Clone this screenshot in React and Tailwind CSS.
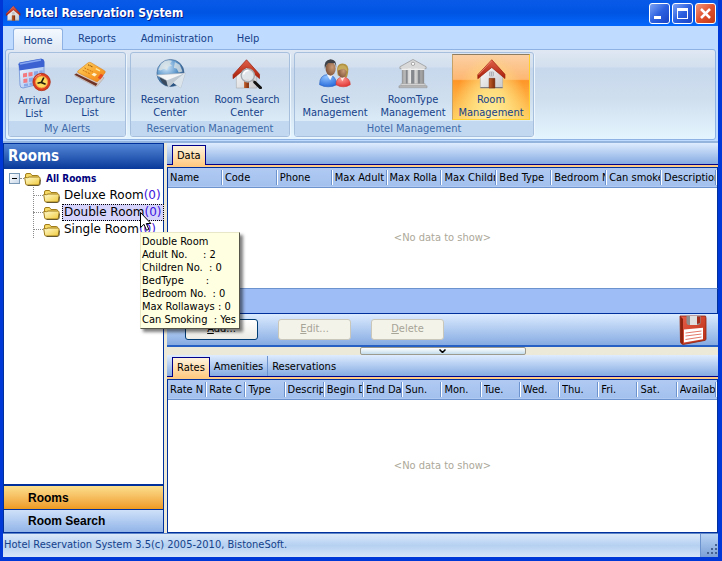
import React from "react";
import clsx from "clsx";

const ribbonTabs = [
  { name: "Home", width: "w-[50px]", active: true },
  { name: "Reports", width: "w-[68px]" },
  { name: "Administration", width: "w-[92px]" },
  { name: "Help", width: "w-[50px]" },
];

const roomColumns = ["Name", "Code", "Phone", "Max Adult", "Max Rolla", "Max Childr", "Bed Type", "Bedroom N", "Can smoke", "Description"];
const rateColumns = ["Rate N", "Rate C", "Type", "Descrip", "Begin D", "End Da", "Sun.", "Mon.", "Tue.", "Wed.", "Thu.", "Fri.", "Sat.", "Availab"];

const roomDetails = [
  "Double Room",
  "Adult No.     : 2",
  "Children No.  : 0",
  "BedType       :",
  "Bedroom No.  : 0",
  "Max Rollaways : 0",
  "Can Smoking  : Yes",
];

function Defs() {
  return (
    <svg className="absolute h-0 w-0" aria-hidden="true">
      <defs>
        <linearGradient id="roof" x1="0" y1="0" x2="0" y2="1">
          <stop offset="0" stopColor="#e0604a" />
          <stop offset="1" stopColor="#a81e08" />
        </linearGradient>
        <linearGradient id="wall" x1="0" y1="0" x2="1" y2="1">
          <stop offset="0" stopColor="#ffffff" />
          <stop offset="1" stopColor="#c9c9cc" />
        </linearGradient>
        <linearGradient id="door" x1="0" y1="0" x2="1" y2="0">
          <stop offset="0" stopColor="#c4602c" />
          <stop offset="1" stopColor="#7e2c0a" />
        </linearGradient>
        <radialGradient id="globe" cx=".35" cy=".28" r=".8">
          <stop offset="0" stopColor="#d5ebfb" />
          <stop offset=".5" stopColor="#5e97cc" />
          <stop offset="1" stopColor="#1b3f6c" />
        </radialGradient>
        <linearGradient id="card" x1="0" y1="0" x2="1" y2="1">
          <stop offset="0" stopColor="#ffd76a" />
          <stop offset=".55" stopColor="#f9a52c" />
          <stop offset="1" stopColor="#f07a1c" />
        </linearGradient>
        <linearGradient id="stone" x1="0" y1="0" x2="1" y2="0">
          <stop offset="0" stopColor="#a5a5a5" />
          <stop offset=".45" stopColor="#f1f1f1" />
          <stop offset="1" stopColor="#909090" />
        </linearGradient>
        <linearGradient id="folder" x1="0" y1="0" x2="1" y2="1">
          <stop offset="0" stopColor="#fffbd0" />
          <stop offset="1" stopColor="#f0ca3c" />
        </linearGradient>
        <linearGradient id="calendar" x1="0" y1="0" x2="1" y2="1">
          <stop offset="0" stopColor="#ffffff" />
          <stop offset="1" stopColor="#90b3ee" />
        </linearGradient>
        <radialGradient id="blueShirt" cx=".4" cy=".2" r=".9">
          <stop offset="0" stopColor="#8fc2ff" />
          <stop offset="1" stopColor="#1e63d8" />
        </radialGradient>
        <radialGradient id="redShirt" cx=".4" cy=".2" r=".9">
          <stop offset="0" stopColor="#ff9a94" />
          <stop offset="1" stopColor="#dc2a2a" />
        </radialGradient>
        <radialGradient id="skin" cx=".65" cy=".4" r=".7">
          <stop offset="0" stopColor="#c99a76" />
          <stop offset="1" stopColor="#7d5138" />
        </radialGradient>
        <linearGradient id="floppy" x1="0" y1="0" x2="1" y2="1">
          <stop offset="0" stopColor="#e8604a" />
          <stop offset="1" stopColor="#b82c14" />
        </linearGradient>
      </defs>
    </svg>
  );
}

function HouseIcon({ className = "h-8 w-8" }) {
  return (
    <svg viewBox="0 0 32 32" className={className}>
      <path d="M5 18 16.5 5 28 18v13H5z" fill="url(#wall)" stroke="#a9a9ac" strokeWidth=".6" />
      <path d="M5 30.5h23" stroke="#77777a" />
      <path d="M14 21h6v10h-6z" fill="url(#door)" stroke="#6e280c" strokeWidth=".5" />
      <path d="M14.5 14.500h4v4h-4zM16.5 14.5v4M14.5 16.5h4" fill="#eef0f4" stroke="#9b9ba0" strokeWidth=".7" />
      <path d="M16.800 1.800 2.400 17.200v4.200L16.800 9.800l13.600 11.400v-4.400z" fill="url(#roof)" stroke="#981b08" strokeWidth=".7" />
      <path d="M16.800 2.700 3.200 17.300" stroke="#f28d74" strokeWidth=".8" />
    </svg>
  );
}

function RoomSearchIcon() {
  return (
    <svg viewBox="0 0 32 32" className="h-8 w-8">
      <path d="M5 18 15.5 5 26 18v13H5z" fill="url(#wall)" stroke="#a9a9ac" strokeWidth=".6" />
      <path d="M13 22h5v9h-5z" fill="url(#door)" />
      <path d="M15.5 1.8 1.6 17.2v4.2L15.5 9.8l13.4 11.4v-4.4z" fill="url(#roof)" stroke="#981b08" strokeWidth=".7" />
      <circle cx="16.8" cy="18" r="6.8" fill="#dfe5ea" fillOpacity=".92" stroke="#a5aab0" strokeWidth="1.4" />
      <path d="M12.5 17a4.5 4.5 0 0 1 5-4" fill="none" stroke="#fff" strokeWidth="1.6" />
      <path d="m22 23 2 2" stroke="#999" strokeWidth="2" />
      <path d="m24 25 6 5.8" stroke="#111" strokeWidth="3" strokeLinecap="round" />
    </svg>
  );
}

function ArrivalIcon() {
  return (
    <svg viewBox="0 0 32 32" className="h-8 w-8 overflow-visible">
      <path d="m1 5 22-4q3 0 3 3v21L5 30q-3 0-3-3z" fill="url(#calendar)" stroke="#6d91d6" strokeWidth=".8" />
      <path d="M.7 6.3 2 4.4l21-3.7q3 0 3.3 3v5L1.4 12.4z" fill="#3b62d0" />
      <path d="m2 6 21-4" stroke="#86a6f1" strokeWidth="1.4" />
      <path d="m5 15.4 4-.6v4l-4 .6zM10.5 14.5l4-.6v4l-4 .6zM5.4 21l4-.6v4l-4 .6z" fill="#f27a80" />
      <path d="m16 13.6 4-.6v4l-4 .6zM21.4 12.8l3.3-.5v3.6l-3.3.5zM11 20l4-.6v4l-4 .6zM6 26l4-.6v2.5l-4 .6zM11.6 25l3-.5V27l-3 .5z" fill="#8ba9e6" />
      <circle cx="23.6" cy="24" r="8.7" fill="#dd3e20" stroke="#a9280d" strokeWidth=".7" />
      <circle cx="23.6" cy="24" r="6" fill="#fddb5c" stroke="#f69a44" strokeWidth="1" />
      <path d="m25.8 19.5-2.4 5 4.2 1.8M19.5 25.2l4-1" fill="none" stroke="#231b0b" strokeWidth="1.7" />
      <path d="M17 20.5a7.6 7.6 0 0 1 6-4" stroke="#ff9c7c" fill="none" strokeWidth="1" />
    </svg>
  );
}

function DepartureIcon() {
  return (
    <svg viewBox="0 0 32 32" className="h-8 w-8">
      <path d="M0 17 14 9.5l16.5 11-7 8.5q-1.5 1-3 0L.6 18.6z" fill="#d7cbc6" stroke="#a99b95" strokeWidth=".5" />
      <path d="m0 17.3 1.8-1.2 22 10.400-1.800 2.300z" fill="#6e3324" />
      <path d="M3.4 13.4 14 5q1.5-.9 3-.2l14 8.3q1.3.9.4 2.3l-7 8.4q-1 1-2.5.3L3.8 15.2q-1.1-.9-.4-1.8z" fill="url(#card)" stroke="#d88015" strokeWidth=".6" />
      <path d="m10.2 10.2 9 4.2M8.5 12.6l8 4" stroke="#c46c10" strokeWidth=".9" strokeDasharray="2 1" />
      <path d="m14 7 5 2.4" stroke="#8f5410" strokeWidth="1.2" strokeDasharray="1.2 .6" />
      <path d="m17.5 17.2 2.5-2 3.2 1.7-2.3 2.2z" fill="#fff3ce" />
      <path d="m24 20.5 3-4.2 3 1.6-3.3 4.2z" fill="#e74d23" />
      <path d="m22 11 4.2 2.4" stroke="#ffe79e" strokeWidth="1.5" />
    </svg>
  );
}

function ReservationIcon() {
  return (
    <svg viewBox="0 0 32 32" className="h-8 w-8">
      <circle cx="16.5" cy="15.5" r="14" fill="url(#globe)" stroke="#345c87" strokeWidth=".6" />
      <path d="M7 6q5-5 11-3l-2 3 2 2-4 1-1 4-3-2-4 2-2-1zM21 4l5 3 3 7-4 1-2-4-3-1z" fill="#dfe6e6" fillOpacity=".75" />
      <path d="M5 19q10 3 10 10Q7 28 5 19z" fill="#38495d" />
      <path d="m1.6 17.5 30-1.9L27 30.7l-7.5-5.2-5.2 4.6-1.8-6.8z" fill="#f3f5f7" stroke="#a7b0ba" strokeWidth=".6" />
      <path d="m12.5 23.3 19.1-7.7-12.1 9.9-5.2 4.6z" fill="#bdc8d2" />
      <path d="m19.5 25.5 12.1-9.9L27 30.7z" fill="#dce4eb" />
    </svg>
  );
}

function GuestIcon() {
  return (
    <svg viewBox="0 0 32 32" className="h-8 w-8">
      <path d="M0 27.5q0-10 8.5-10.5 8.5.5 9.5 10.5Q9 32 0 27.5z" fill="url(#blueShirt)" stroke="#2b63bd" strokeWidth=".6" />
      <path d="m7.5 17 3.5 6 3-6z" fill="#f1f5fb" />
      <ellipse cx="11.5" cy="11" rx="5.2" ry="7.2" fill="url(#skin)" />
      <path d="M5.5 11Q4 2 11.5 1.2 18 1.6 17.3 10l-1.3-4.5-7-.4-2 2.4z" fill="#3d4147" />
      <path d="M19 18q-3-12 5-12.2Q31 6.4 29.500 15l-1.200 5z" fill="#b19242" />
      <path d="M17 27.5q0-7.5 7.2-8 7.4.8 7.6 8-7 4.5-14.800 0z" fill="url(#redShirt)" stroke="#cf3e3a" strokeWidth=".6" />
      <path d="m21.5 19.5 2 4.5 2.7-4.5z" fill="#ffe7df" />
      <ellipse cx="23.5" cy="14.5" rx="4.3" ry="5.8" fill="url(#skin)" />
      <path d="M18.700 13q.5-6 6-5.500 4.300 1.500 4 6.500l-3.500-3z" fill="#c6aa5b" />
    </svg>
  );
}

function RoomTypeIcon() {
  return (
    <svg viewBox="0 0 32 32" className="h-8 w-8">
      <path d="M2.5 9 16 1.5 29.5 9v2h-27z" fill="#d9d9d9" stroke="#8e8e8e" strokeWidth=".7" />
      <circle cx="16" cy="6" r="1.7" fill="#fff" stroke="#777" strokeWidth=".6" />
      <path d="M4.5 11h23v16h-23z" fill="#85888c" />
      <path d="M5 10.5h3.5v17H5zM10.5 10.5H14v17h-3.500zM17.5 10.5H21v17h-3.500zM23.500 10.5H27v17h-3.500z" fill="url(#stone)" />
      <path d="M4 10.5h24v2H4z" fill="#efefef" />
      <path d="M3.5 26.5h25v2.300h-25z" fill="#d7d7d7" stroke="#999" strokeWidth=".5" />
      <path d="M1.5 28.700h29v2h-29z" fill="#bcbcbc" stroke="#888" strokeWidth=".5" />
    </svg>
  );
}

function FolderIcon() {
  return (
    <svg viewBox="0 0 17 14" className="h-[14px] w-[17px] shrink-0">
      <path d="M1.5 3q0-1.5 1.5-1.5h3.5L8 3.5h5.5q1 0 1 1v2h-13z" fill="#f5d964" stroke="#a07c1a" />
      <path d="M.7 5.5q3.6.6 4.300-.5h9.500q1.500 0 1.600 1l-.8 6q-.1 1-1.300 1H3q-1.100 0-1.300-1z" fill="url(#folder)" stroke="#a07c1a" />
      <path d="M3.5 13.500h11l1.600-1 .4-5" fill="none" stroke="#4b3d16" strokeWidth=".8" />
    </svg>
  );
}

function FloppyIcon() {
  return (
    <svg viewBox="0 0 28 30" className="h-[30px] w-7">
      <path d="M1 1h25.500l.5 2v21q0 1-1 1.400L4 29.500Q2 29 1.500 27z" fill="url(#floppy)" stroke="#8e2410" strokeWidth=".8" />
      <path d="M1.200 1 4 4v25q-2.200-.5-2.500-2z" fill="#8e2410" />
      <path d="M7.500 1h14v7.500l-2 1.500H9.500q-2-.5-2-2.500z" fill="#8f8e8e" />
      <path d="M11 1h7v9l-7 .1z" fill="#dfdfdf" />
      <path d="M18 1.500h3V8l-3 1z" fill="#a22d1d" />
      <path d="m5 14.500 19-1.800v11.500L5 27.500z" fill="#fff" />
      <path d="m6.500 18 16-2M6.500 21l16-2M6.500 24.500l16-2.500" stroke="#e37869" />
    </svg>
  );
}

const ribbonGroups = [
  {
    caption: "My Alerts",
    items: [
      { label: ["Arrival", "List"], icon: <ArrivalIcon />, width: "w-[48px]" },
      { label: ["Departure", "List"], icon: <DepartureIcon />, width: "w-[64px]" },
    ],
  },
  {
    caption: "Reservation Management",
    items: [
      { label: ["Reservation", "Center"], icon: <ReservationIcon />, width: "w-[76px]" },
      { label: ["Room Search", "Center"], icon: <RoomSearchIcon />, width: "w-[78px]" },
    ],
  },
  {
    caption: "Hotel Management",
    items: [
      { label: ["Guest", "Management"], icon: <GuestIcon />, width: "w-[78px]" },
      { label: ["RoomType", "Management"], icon: <RoomTypeIcon />, width: "w-[78px]" },
      { label: ["Room", "Management"], icon: <HouseIcon />, width: "w-[78px]", active: true },
    ],
  },
];

function TitleBar() {
  const button = "grid h-[21px] w-[21px] place-items-center rounded-[3px] border border-white";
  const blue = "bg-linear-to-br from-[#7ea2f4] via-[#2d60e0] to-[#1c44c4]";
  return (
    <header className="flex h-[26px] items-center justify-between bg-linear-to-b from-[#0a5ae8] via-[#0054e3] to-[#0468fc] pr-[2px] pl-[2px]">
      <h1 className="flex items-center gap-1 font-['DejaVu_Sans_Condensed','DejaVu_Sans',sans-serif] text-[12px] font-bold text-white [text-shadow:1px_1px_#0a1883]">
        <HouseIcon className="h-4 w-4" />
        Hotel Reservation System
      </h1>
      <div className="flex gap-[2px]">
        <button aria-label="Minimize" className={clsx(button, blue)}>
          <svg viewBox="0 0 19 19" className="h-[19px] w-[19px]"><path d="M4 12h7v3H4z" fill="#fff" /></svg>
        </button>
        <button aria-label="Maximize" className={clsx(button, blue)}>
          <svg viewBox="0 0 19 19" className="h-[19px] w-[19px]"><path d="M4 4h11v11H4zM5 7v7h9V7z" fill="#fff" fillRule="evenodd" /></svg>
        </button>
        <button aria-label="Close" className={clsx(button, "bg-linear-to-br from-[#f0957a] via-[#e0502c] to-[#c33a12]")}>
          <svg viewBox="0 0 19 19" className="h-[19px] w-[19px]"><path d="m5 5 9 9m0-9-9 9" stroke="#fff" strokeWidth="2.5" /></svg>
        </button>
      </div>
    </header>
  );
}

function Ribbon() {
  return (
    <div className="bg-[#bfdbff] px-[2px] pb-px text-[#15428b]">
      <nav className="flex h-[23px] items-end pl-2">
        {ribbonTabs.map((tab) => (
          <button
            key={tab.name}
            className={clsx(
              "h-[22px] pt-[3px] text-center whitespace-nowrap",
              tab.width,
              tab.active && "relative z-10 -mb-px rounded-t-[3px] border border-b-0 border-[#8db2e3] bg-linear-to-b from-[#f4f9ff] to-[#dfe8f4]",
            )}
          >
            {tab.name}
          </button>
        ))}
      </nav>
      <div className="flex gap-1 rounded-[3px] border border-[#8db2e3] bg-[linear-gradient(#dfe8f3_0px,#d3dfee_17px,#c7d8ed_18px,#d0dfee_50px,#e4f5ff_100%)] px-[2px] py-[2px]">
        {ribbonGroups.map((group) => (
          <section key={group.caption} className="overflow-hidden rounded-[3px] border border-[#a6bfdc] shadow-[1px_1px_#eef6fd]">
            <div className="flex py-px pr-[3px] pl-px">
              {group.items.map((item) => (
                <button
                  key={item.label.join(" ")}
                  className={clsx(
                    "flex h-[66px] flex-col items-center border pt-[3px] leading-[13px] whitespace-nowrap",
                    item.width,
                    item.active
                      ? "border-[#ffd02e] border-t-[#8e7c60] border-l-[#c5a268] bg-[radial-gradient(ellipse_at_50%_105%,#fff0a0_0%,#ffdc7c_35%,transparent_72%),linear-gradient(#fbd0a4_0%,#fdb772_38%,#fe9629_40%,#ffce60_100%)]"
                      : "border-transparent",
                  )}
                >
                  {item.icon}
                  <span className="mt-1">{item.label[0]}</span>
                  <span>{item.label[1]}</span>
                </button>
              ))}
            </div>
            <h2 className="bg-[#c1d8f0] text-center leading-[15px] text-[#3e6aaa]">{group.caption}</h2>
          </section>
        ))}
      </div>
    </div>
  );
}

function TreeItem({ name, selected, children }) {
  return (
    <li className="relative flex h-[17px] items-center">
      <span className="w-[10px] shrink-0 border-t border-dotted border-[#8c8c8c]" />
      <FolderIcon />
      <button
        className={clsx(
          "ml-[2px] h-[17px] border px-px font-['DejaVu_Sans',Verdana,sans-serif] text-[12px] leading-[15px] whitespace-nowrap text-black",
          selected ? "border-dotted border-black bg-[#d5d3fc]" : "border-transparent",
        )}
      >
        {name}
        <span className="text-[#3c14dc]">(0)</span>
      </button>
      {children}
    </li>
  );
}

function Sidebar() {
  return (
    <aside className="flex w-[161px] shrink-0 flex-col border border-[#00309c] bg-white">
      <h2 className="h-[25px] bg-linear-to-b from-[#5487d6] to-[#07389a] pl-1 font-['DejaVu_Sans_Condensed','DejaVu_Sans',sans-serif] text-[15px] leading-[25px] font-bold text-white">
        Rooms
      </h2>
      <div className="flex-1 pt-px pl-[5px]">
        <div className="flex h-[17px] items-center">
          <button aria-label="Collapse All Rooms" className="grid h-[11px] w-[11px] place-items-center border border-[#7898b5] bg-linear-to-br from-white to-[#c9d8ea]">
            <span className="h-px w-[5px] bg-black" />
          </button>
          <span className="w-1 border-t border-dotted border-[#8c8c8c]" />
          <FolderIcon />
          <span className="ml-[5px] font-['DejaVu_Sans_Condensed','DejaVu_Sans',sans-serif] text-[10px] font-bold text-[#00007c]">All Rooms</span>
        </div>
        <ul className="ml-6 bg-[linear-gradient(#8c8c8c_50%,transparent_50%)] bg-[size:1px_2px] bg-repeat-y">
          <TreeItem name="Deluxe Room" />
          <TreeItem name="Double Room" selected>
            <svg viewBox="0 0 12 20" className="absolute top-2 left-[107px] z-30 h-5 w-3">
              <path d="M.5.5v15l3.500-3.200 2.500 6 2.300-1-2.500-5.800h4.600z" fill="#fff" stroke="#000" />
            </svg>
            <div role="tooltip" className="absolute top-[28px] left-[107px] z-20 w-[100px] border border-[#e8e8c8] border-r-[#55554a] border-b-[#55554a] bg-[#ffffe1] py-[2px] pl-px leading-[13px] whitespace-pre text-black shadow-[3px_3px_3px_rgba(0,0,0,0.5)]">
              {roomDetails.map((line) => (
                <p key={line}>{line}</p>
              ))}
            </div>
          </TreeItem>
          <TreeItem name="Single Room" />
        </ul>
      </div>
      <div className="border-t border-[#00309c] font-['Liberation_Sans',Arial,sans-serif] text-[12px] font-bold text-black">
        <button className="block h-[24px] w-full border-t border-[#00309c] bg-linear-to-b from-[#fbdf8c] to-[#ee9a1c] pl-6 text-left">Rooms</button>
        <button className="block h-[23px] w-full border-t border-[#00309c] bg-linear-to-b from-[#cfe1f9] to-[#91b4e8] pl-6 text-left">Room Search</button>
      </div>
    </aside>
  );
}

function PanelTabs({ tabs }) {
  return (
    <div>
      <div className="flex h-[22px] items-end border-b border-[#00008b] bg-linear-to-b from-[#dfecfe] to-[#86abe2] pl-[5px]">
        {tabs.map((tab, i) => (
          <button
            key={tab}
            className={clsx(
              "h-[20px] px-1 pt-[2px] whitespace-nowrap",
              i === 0 && "relative -mb-px border border-b-0 border-[#00008b] bg-linear-to-b from-[#fff3dc] to-[#ffcb84]",
              i > 0 && i < tabs.length - 1 && "border-r border-[#6d93cf]",
            )}
          >
            {tab}
          </button>
        ))}
      </div>
      <div className="h-[2px] bg-[#ffcb84]" />
    </div>
  );
}

function DataGrid({ columns, className }) {
  return (
    <div className={clsx("flex flex-col border-x border-t border-[#00309c] bg-white", className)}>
      <table className="w-full table-fixed border-collapse">
        <thead>
          <tr className="h-[19px] border-b border-[#6d93cf] bg-linear-to-b from-[#b0caf2] to-[#a3c1ee]">
            {columns.map((column) => (
              <th key={column} scope="col" className="p-0 text-left font-normal">
                <div className="flex h-[15px] border-r border-white">
                  <div className="w-full border-r border-[#6d93cf] pl-[2px]">
                    <div className="overflow-hidden leading-[16px] whitespace-nowrap">{column}</div>
                  </div>
                </div>
              </th>
            ))}
          </tr>
        </thead>
      </table>
      <p className="grid flex-1 place-items-center text-[#aca899]">&lt;No data to show&gt;</p>
    </div>
  );
}

function ActionBar() {
  const disabled = "border-[#c9c7ba] bg-[#f4f3ea] text-[#a6a497]";
  const base = "h-[21px] w-[73px] rounded-[3px] border";
  return (
    <div className="flex h-[33px] items-center justify-between border-b-2 border-[#2660c4] bg-linear-to-b from-[#dcebfe] to-[#86abe2] pr-[11px] pl-[18px]">
      <div className="flex gap-5">
        <button className={clsx(base, "border-[#003c74] bg-linear-to-b from-white to-[#ecebe5] text-black")}><u>A</u>dd...</button>
        <button disabled className={clsx(base, disabled)}><u>E</u>dit...</button>
        <button disabled className={clsx(base, disabled)}><u>D</u>elete</button>
      </div>
      <button aria-label="Save"><FloppyIcon /></button>
    </div>
  );
}

export default function App() {
  return (
    <div className="flex min-h-screen flex-col border-r-4 border-b-4 border-l-[3px] border-[#0038d8] bg-[#bfdbff] font-['DejaVu_Sans_Condensed','DejaVu_Sans',sans-serif] text-[11px] text-black">
      <Defs />
      <TitleBar />
      <Ribbon />
      <main className="flex flex-1 border-t-2 border-[#94b4de] bg-[#ece9d8]">
        <Sidebar />
        <div className="ml-[3px] flex min-w-0 flex-1 flex-col">
          <PanelTabs tabs={["Data"]} />
          <DataGrid columns={roomColumns} className="h-[121px]" />
          <div className="h-[26px] border border-[#00309c] border-t-[#6d93cf] bg-[#9ebcf5]" />
          <ActionBar />
          <div className="flex h-2 justify-center">
            <button aria-label="Collapse panel" className="grid h-2 w-[166px] place-items-center rounded-[2px] border border-[#9c9a8c] bg-linear-to-b from-white to-[#c3dcec]">
              <svg viewBox="0 0 7 4" className="h-1 w-[7px]"><path d="m.5.5 3 3 3-3" fill="none" stroke="#000" strokeWidth="1.5" /></svg>
            </button>
          </div>
          <PanelTabs tabs={["Rates", "Amenities", "Reservations"]} />
          <DataGrid columns={rateColumns} className="flex-1 border-b" />
        </div>
      </main>
      <footer className="flex h-6 items-center justify-between border-t border-[#5c86c8] bg-linear-to-b from-[#dbe9fa] via-[#b5d0f1] to-[#d8e6f8] pl-px text-[#15428b]">
        <span>Hotel Reservation System 3.5(c) 2005-2010, BistoneSoft.</span>
        <span className="flex h-full w-[18px] items-end justify-end border-l border-[#6d93cf] bg-linear-to-b from-[#b8d3f4] to-[#7ba0d6]">
          <svg viewBox="0 0 12 14" className="h-[14px] w-3">
            <path d="M9 1h2v2H9zM5 5h2v2H5zM9 5h2v2H9zM1 9h2v2H1zM5 9h2v2H5zM9 9h2v2H9z" fill="#45618f" />
          </svg>
        </span>
      </footer>
    </div>
  );
}
